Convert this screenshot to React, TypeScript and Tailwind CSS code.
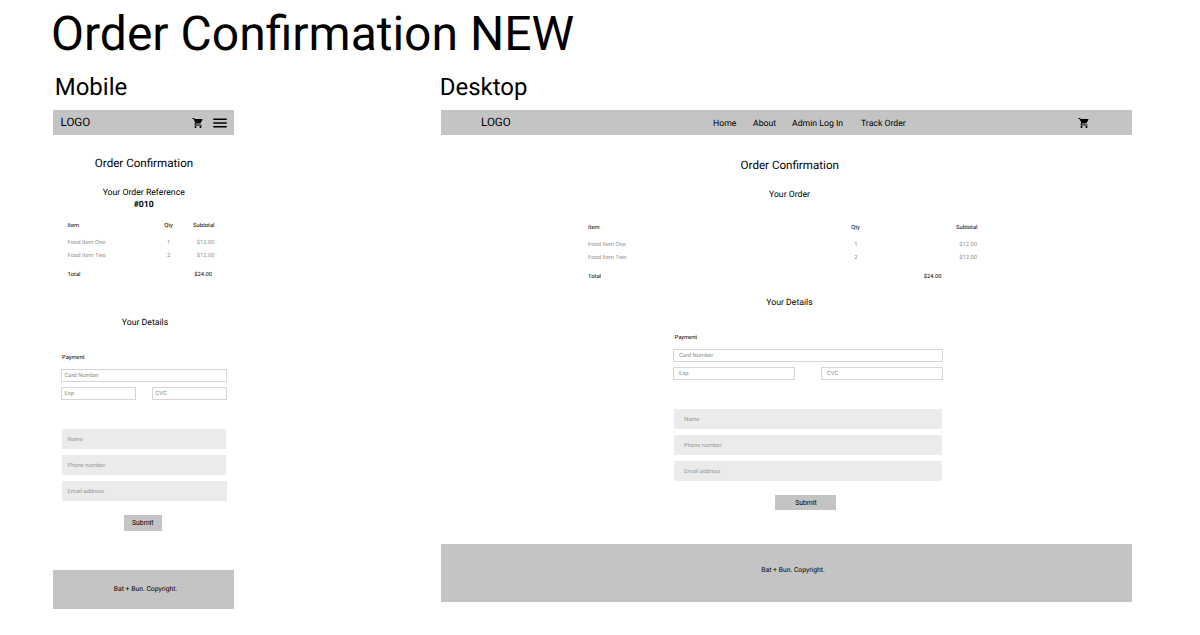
import type { ReactNode } from 'react';
import { MdShoppingCart, MdMenu } from 'react-icons/md';

const items = [
  { name: 'Food Item One', qty: 1, subtotal: '$12.00' },
  { name: 'Food Item Two', qty: 2, subtotal: '$12.00' },
];

function CardField({ children, className }: { children: ReactNode; className: string }) {
  return (
    <div className={`flex h-[13px] items-center border border-[#d6d6d6] bg-white pt-[3.4px] text-[5.8px] leading-none text-[#8c8c8c] ${className}`}>
      {children}
    </div>
  );
}

function Field({ children, className }: { children: ReactNode; className: string }) {
  return (
    <div className={`flex h-5 items-center bg-[#ebebeb] pt-[4.4px] text-[5.8px] leading-none text-[#969696] ${className}`}>
      {children}
    </div>
  );
}

function MobileOrder() {
  return (
    <section className="flex w-[181px] flex-col">
      <header className="flex h-[25px] items-center bg-[#c4c4c4] pr-[5px] pl-[7.5px]">
        <span className="mr-auto pt-[1.5px] text-[11.6px] leading-none">LOGO</span>
        <MdShoppingCart className="mr-[7.5px] size-[12px]" />
        <MdMenu className="size-[18px]" />
      </header>
      <h3 className="mt-5 pl-px text-center text-[11.6px] leading-4">Order Confirmation</h3>
      <div className="mt-[16px] pl-[0.5px] text-center text-[8.7px] leading-[12px]">
        <p>Your Order Reference</p>
        <p className="font-bold">#010</p>
      </div>
      <div className="mt-[10px] pr-[19.5px] pl-[14.5px] text-[5.8px] leading-[10px]">
        <div className="grid grid-cols-[93.5px_15px_1fr]">
          <span>Item</span>
          <span className="text-center">Qty</span>
          <span className="text-right">Subtotal</span>
        </div>
        <div className="mt-[6.5px] flex flex-col gap-[3.5px] text-[#909090]">
          {items.map((item) => (
            <div key={item.name} className="grid grid-cols-[93.5px_15px_1fr]">
              <span>{item.name}</span>
              <span className="pl-[0.5px] text-center">{item.qty}</span>
              <span className="text-right">{item.subtotal}</span>
            </div>
          ))}
        </div>
        <div className="mt-[9px] flex justify-between pr-[2.5px]">
          <span>Total</span>
          <span>$24.00</span>
        </div>
      </div>
      <h4 className="mt-[37px] pl-[3px] text-center text-[8.7px] leading-[12px]">Your Details</h4>
      <div className="mt-6 pr-[7px] pl-2">
        <p className="pl-px text-[5.8px] leading-[10px]">Payment</p>
        <CardField className="mt-[6px] w-[166px] pl-[2.5px]">Card Number</CardField>
        <div className="mt-[5px] flex justify-between">
          <CardField className="w-[75px] pl-[2.5px]">Exp</CardField>
          <CardField className="w-[75px] pl-[2.5px]">CVC</CardField>
        </div>
        <div className="mt-[29px] flex flex-col gap-[6px]">
          <Field className="ml-[0.5px] w-[164.5px] pl-[6px]">Name</Field>
          <Field className="ml-[0.5px] w-[164.5px] pl-[6px]">Phone number</Field>
          <Field className="ml-[0.5px] w-[165px] pl-[6px]">Email address</Field>
        </div>
      </div>
      <button className="mt-[14px] ml-[71px] h-[15.5px] w-[37.5px] bg-[#c4c4c4] pt-px text-[6.8px] leading-none">Submit</button>
      <footer className="mt-[39.5px] flex h-[38.5px] items-center justify-center bg-[#c4c4c4] pl-[4px] text-[6.8px] leading-none">
        Bat + Bun. Copyright.
      </footer>
    </section>
  );
}

function DesktopOrder() {
  return (
    <section className="flex w-[691px] flex-col">
      <header className="flex h-[25px] items-center bg-[#c4c4c4] pl-10 text-[8.7px] leading-none">
        <span className="w-[232px] pt-[1.5px] text-[11.6px]">LOGO</span>
        <nav className="flex pt-[3.4px]">
          <span className="w-[40px]">Home</span>
          <span className="w-[39px]">About</span>
          <span className="w-[69px]">Admin Log In</span>
          <span>Track Order</span>
        </nav>
        <MdShoppingCart className="mr-[42px] ml-auto size-[12px]" />
      </header>
      <h3 className="mt-[22px] pl-[6.5px] text-center text-[11.6px] leading-4">Order Confirmation</h3>
      <h4 className="mt-[16px] pl-[6px] text-center text-[8.7px] leading-[12px]">Your Order</h4>
      <div className="mt-[22px] ml-[147px] w-[389.5px] text-[5.8px] leading-[10px]">
        <div className="grid grid-cols-[260px_15px_1fr]">
          <span>Item</span>
          <span className="text-center">Qty</span>
          <span className="text-right">Subtotal</span>
        </div>
        <div className="mt-[7px] flex flex-col gap-[3px] text-[#909090]">
          {items.map((item) => (
            <div key={item.name} className="grid grid-cols-[260px_15px_1fr]">
              <span>{item.name}</span>
              <span className="pl-px text-center">{item.qty}</span>
              <span className="pr-[0.5px] text-right">{item.subtotal}</span>
            </div>
          ))}
        </div>
        <div className="mt-[9px] flex justify-between pr-[36px]">
          <span>Total</span>
          <span>$24.00</span>
        </div>
      </div>
      <h4 className="mt-[15px] pl-[6px] text-center text-[8.7px] leading-[12px]">Your Details</h4>
      <div className="mt-[24px] ml-[232px] w-[270px]">
        <p className="pl-[1.5px] text-[5.8px] leading-[10px]">Payment</p>
        <CardField className="mt-[6px] pl-[5px]">Card Number</CardField>
        <div className="mt-[5px] flex justify-between">
          <CardField className="w-[122px] pl-[5px]">Exp</CardField>
          <CardField className="w-[122px] pl-[5px]">CVC</CardField>
        </div>
        <div className="mt-[29px] flex flex-col gap-[6px]">
          <Field className="ml-px w-[267.5px] pl-[10px]">Name</Field>
          <Field className="ml-px w-[267.5px] pl-[10px]">Phone number</Field>
          <Field className="ml-px w-[268px] pl-[10px]">Email address</Field>
        </div>
      </div>
      <button className="mt-[14px] ml-[334.3px] h-[15px] w-[61.2px] bg-[#c4c4c4] pt-[2px] text-[6.8px] leading-none">Submit</button>
      <footer className="mt-[34px] flex h-[58px] items-start justify-center bg-[#c4c4c4] pt-[23px] pl-[13px] text-[6.8px] leading-none">
        Bat + Bun. Copyright.
      </footer>
    </section>
  );
}

export default function App() {
  return (
    <main className="h-[635px] w-[1200px] overflow-hidden bg-white pt-[6px] pl-[53px] font-['Roboto',sans-serif] text-black [text-rendering:geometricPrecision]">
      <h1 className="-ml-[4px] pl-[2px] text-[48px] leading-[56px]">Order Confirmation NEW</h1>
      <div className="mt-[11px] flex">
        <h2 className="w-[386px] pl-[1.7px] text-[24px] leading-7">Mobile</h2>
        <h2 className="pl-[0.7px] text-[24px] leading-7">Desktop</h2>
      </div>
      <div className="mt-[9px] flex items-start gap-[207px]">
        <MobileOrder />
        <DesktopOrder />
      </div>
    </main>
  );
}
